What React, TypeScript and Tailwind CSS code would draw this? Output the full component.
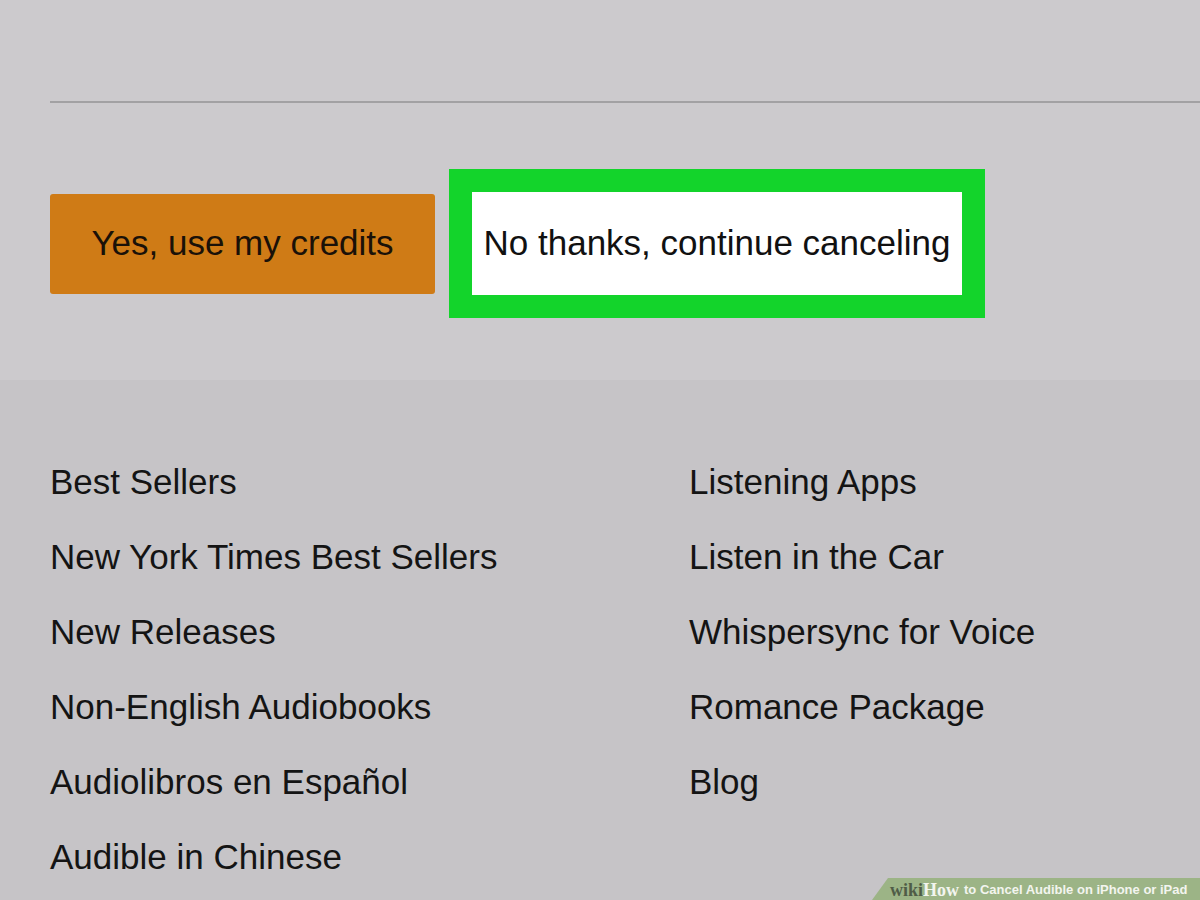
import React from 'react'

const leftLinks = [
  'Best Sellers',
  'New York Times Best Sellers',
  'New Releases',
  'Non-English Audiobooks',
  'Audiolibros en Español',
  'Audible in Chinese',
]

const rightLinks = [
  'Listening Apps',
  'Listen in the Car',
  'Whispersync for Voice',
  'Romance Package',
  'Blog',
]

function FooterLink({ label }: { label: string }) {
  return (
    <a className="block h-[75px] leading-[75px] text-[35px] text-[#141414] whitespace-nowrap">
      {label}
    </a>
  )
}

export default function App() {
  return (
    <div
      className="relative w-[1200px] h-[900px] overflow-hidden bg-[#c6c4c7]"
      style={{ fontFamily: '"Liberation Sans", Arial, sans-serif' }}
    >
      {/* cancel offer panel */}
      <section className="h-[380px] bg-[#cccacd] pt-[101px] pl-[50px]">
        <div className="h-[2px] bg-[#a2a1a3]" />
        <div className="flex items-center gap-[14px] mt-[66px]">
          <button className="w-[385px] h-[100px] rounded-[3px] bg-[#cf7b16] text-[35px] text-[#1a1108] flex items-center justify-center">
            Yes, use my credits
          </button>
          <div className="w-[536px] h-[149px] bg-[#13d42b] flex items-center justify-center">
            <button className="w-[490px] h-[103px] bg-white text-[35px] text-[#111] flex items-center justify-center whitespace-nowrap">
              No thanks, continue canceling
            </button>
          </div>
        </div>
      </section>

      {/* footer links */}
      <footer className="grid grid-cols-[639px_1fr] pl-[50px] pt-[64px]">
        <div>
          {leftLinks.map((l) => (
            <FooterLink key={l} label={l} />
          ))}
        </div>
        <div>
          {rightLinks.map((l) => (
            <FooterLink key={l} label={l} />
          ))}
        </div>
      </footer>

      {/* watermark */}
      <div className="absolute right-0 bottom-0 h-[22px] w-[328px]">
        <svg className="absolute inset-0" width="328" height="22" viewBox="0 0 328 22">
          <polygon points="16,0 328,0 328,22 0,22" fill="#9cb486" />
        </svg>
        <div className="relative flex items-center h-full pl-[18px] pt-[1px] font-bold leading-none whitespace-nowrap">
          <span className="text-[#4f5c47] text-[18px]" style={{ fontFamily: '"Liberation Serif", serif' }}>wiki</span>
          <span className="text-[#f3f5ef] text-[18px]" style={{ fontFamily: '"Liberation Serif", serif' }}>How</span>
          <span className="text-[#f3f5ef] text-[13px] ml-[5px]">to Cancel Audible on iPhone or iPad</span>
        </div>
      </div>
    </div>
  )
}
